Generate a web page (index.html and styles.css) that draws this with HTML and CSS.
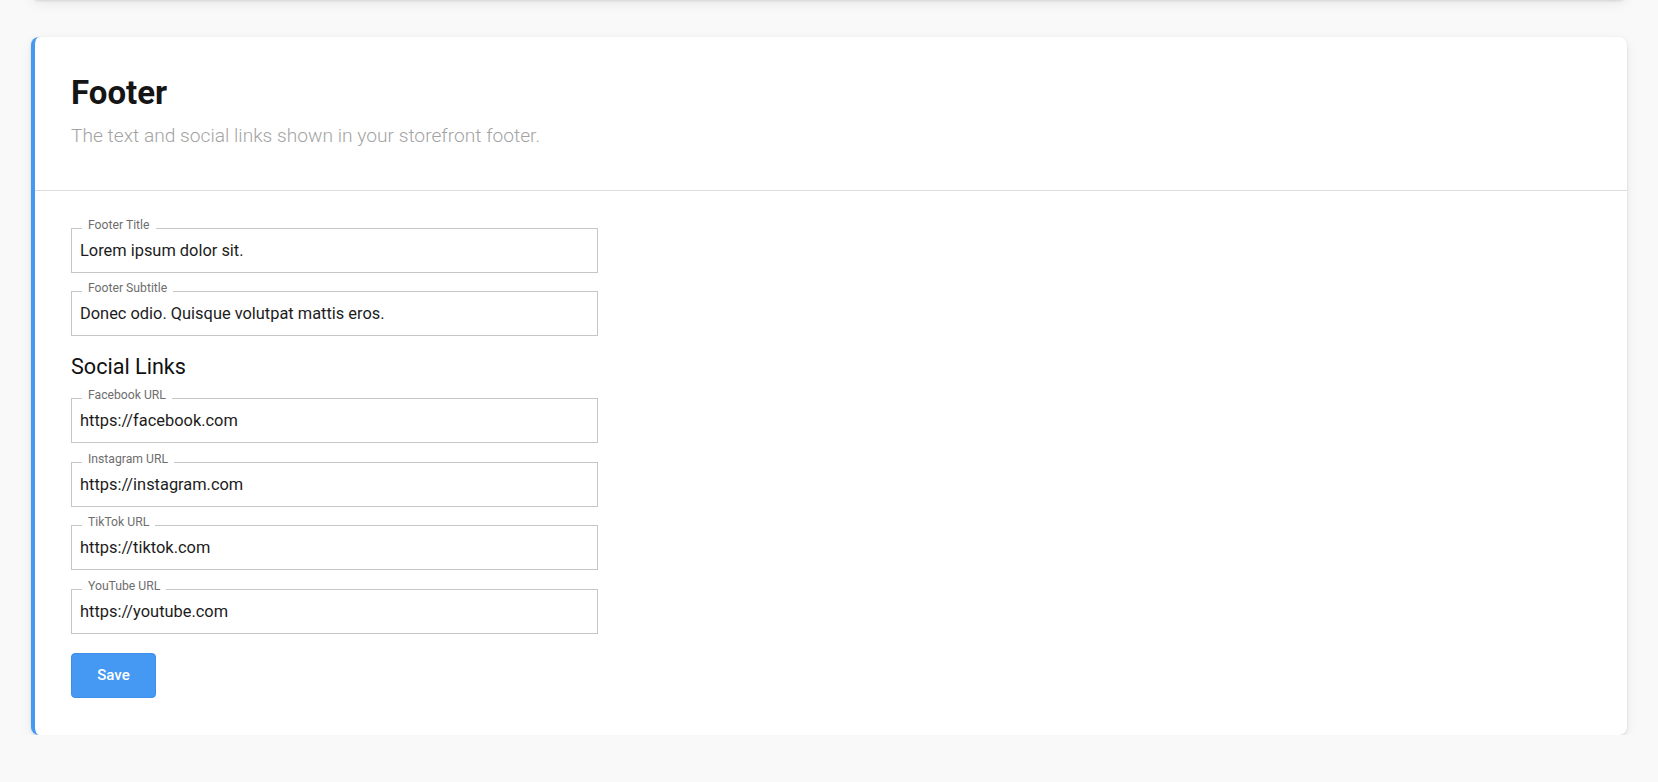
FILE: index.html
```html
<!DOCTYPE html>
<html lang="en">
<head>
  <meta charset="UTF-8">
  <meta name="viewport" content="width=device-width, initial-scale=1.0">
  <title>Storefront Settings - Footer</title>
  <link rel="stylesheet" href="styles.css">
</head>
<body>
  <div class="settings">
    <div class="card card-prev"></div>

    <div class="card card-active">
      <div class="card-header">
        <h2 class="card-title">Footer</h2>
        <p class="card-desc">The text and social links shown in your storefront footer.</p>
      </div>

      <form class="card-body">
        <div class="field">
          <label for="footerTitle">Footer Title</label>
          <input id="footerTitle" type="text" value="Lorem ipsum dolor sit.">
        </div>
        <div class="field">
          <label for="footerSubtitle">Footer Subtitle</label>
          <input id="footerSubtitle" type="text" value="Donec odio. Quisque volutpat mattis eros.">
        </div>

        <h3 class="section-title">Social Links</h3>

        <div class="field">
          <label for="facebookUrl">Facebook URL</label>
          <input id="facebookUrl" type="text" value="https://facebook.com">
        </div>
        <div class="field">
          <label for="instagramUrl">Instagram URL</label>
          <input id="instagramUrl" type="text" value="https://instagram.com">
        </div>
        <div class="field">
          <label for="tiktokUrl">TikTok URL</label>
          <input id="tiktokUrl" type="text" value="https://tiktok.com">
        </div>
        <div class="field">
          <label for="youtubeUrl">YouTube URL</label>
          <input id="youtubeUrl" type="text" value="https://youtube.com">
        </div>

        <button type="submit">Save</button>
      </form>
    </div>
  </div>
</body>
</html>
```

FILE: styles.css
```css
* {
  box-sizing: border-box;
}

body {
  margin: 0;
  padding: 0 31px;
  font-family: Roboto, 'Noto Sans', sans-serif;
  background: #f9f9f9;
  color: #1a1a1a;
}

.settings {
  display: flex;
  flex-direction: column;
  gap: 37px;
  margin-top: -40px;
}

.card {
  background: #fff;
  border-radius: 8px;
  box-shadow: 0 1px 3px rgba(0, 0, 0, 0.12), 0 4px 14px rgba(0, 0, 0, 0.06);
}

.card-prev {
  height: 40px;
}

.card-active {
  border-left: 4px solid #4599f3;
}

.card-header {
  padding: 36px 36px 40px;
  border-bottom: 1px solid #dcdcdc;
}

.card-title {
  margin: 0;
  font-size: 33px;
  font-weight: 700;
  line-height: 40px;
  color: #151515;
}

.card-desc {
  margin: 9px 0 0;
  font-size: 19.2px;
  font-weight: 300;
  line-height: 28px;
  color: #a3a3a3;
}

.card-body {
  padding: 37px 36px 37px;
}

.field {
  position: relative;
  width: 527px;
  height: 45px;
  margin-bottom: 18.4px;
  border: 1px solid #c6c6c6;
}

.field label {
  position: absolute;
  top: -11px;
  left: 10px;
  padding: 0 6px;
  background: #fff;
  font-size: 12.2px;
  line-height: 14px;
  color: #6e6e6e;
}

.field input {
  width: 100%;
  height: 100%;
  padding: 0 8px;
  border: none;
  outline: none;
  background: transparent;
  font-family: inherit;
  font-size: 16.4px;
  color: #1c1c1c;
}

.section-title {
  margin: 19px 0;
  font-size: 21.6px;
  font-weight: 400;
  line-height: 24px;
  color: #111;
}

button {
  display: block;
  width: 85px;
  height: 45px;
  margin-top: 19px;
  background: #4599f3;
  border: 1px solid #3d8fe8;
  border-radius: 4px;
  color: #fff;
  font-family: inherit;
  font-size: 15px;
  font-weight: 500;
  cursor: pointer;
}

button:hover {
  background: #3a8ce6;
}
```
